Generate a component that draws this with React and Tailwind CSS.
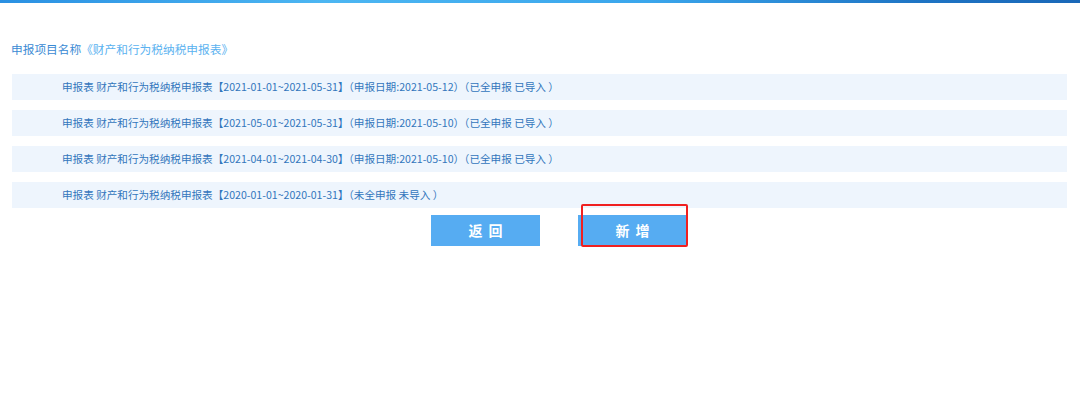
const ROWS = [
  { range: "2021-01-01~2021-05-31", date: "2021-05-12", status: "已全申报 已导入" },
  { range: "2021-05-01~2021-05-31", date: "2021-05-10", status: "已全申报 已导入" },
  { range: "2021-04-01~2021-04-30", date: "2021-05-10", status: "已全申报 已导入" },
  { range: "2020-01-01~2020-01-31", date: null, status: "未全申报 未导入" },
];

// Declaration list page: project title, record rows and action buttons.
export default function App() {
  return (
    <div
      className="w-[1080px] h-[407px] bg-white overflow-hidden"
      style={{ fontFamily: '"Microsoft YaHei", "Noto Sans CJK SC", "Liberation Sans", sans-serif' }}
    >
      <div className="h-[3px] bg-[linear-gradient(90deg,#2a90e2_0%,#4cb6f2_30%,#3aa6ec_60%,#1e74c4_85%,#1a68b8_100%)]" />

      <div className="pl-[11px] pt-[36px] h-[71px] text-[11.7px] leading-[20px]">
        <span className="text-[#3a8ad4]">申报项目名称</span>
        <span className="text-[#5ab2f0]">《财产和行为税纳税申报表》</span>
      </div>

      <div className="flex flex-col gap-[10px] pl-[12px] w-[1067px]">
        {ROWS.map((r, i) => (
          <div
            key={i}
            className="h-[26px] bg-[#eef5fd] flex items-center pl-[50px] text-[10.6px] text-[#3276bc] whitespace-pre"
          >
            {`申报表 财产和行为税纳税申报表【${r.range}】`}
            {r.date ? `（申报日期:${r.date}）` : ""}
            {`（${r.status} ）`}
          </div>
        ))}
      </div>

      <div className="flex justify-center gap-[38px] pt-[7px] pl-[38px]">
        <button className="w-[109px] h-[31px] bg-[#56acf2] text-white text-[14px] font-bold tracking-[6px] pl-[6px]">
          返回
        </button>
        <div className="relative">
          <button className="w-[109px] h-[31px] bg-[#56acf2] text-white text-[14px] font-bold tracking-[6px] pl-[6px]">
            新增
          </button>
          <div className="absolute left-[3px] top-[-11px] w-[107px] h-[43px] border-2 border-[#f02020] rounded-[2px]" />
        </div>
      </div>
    </div>
  );
}
